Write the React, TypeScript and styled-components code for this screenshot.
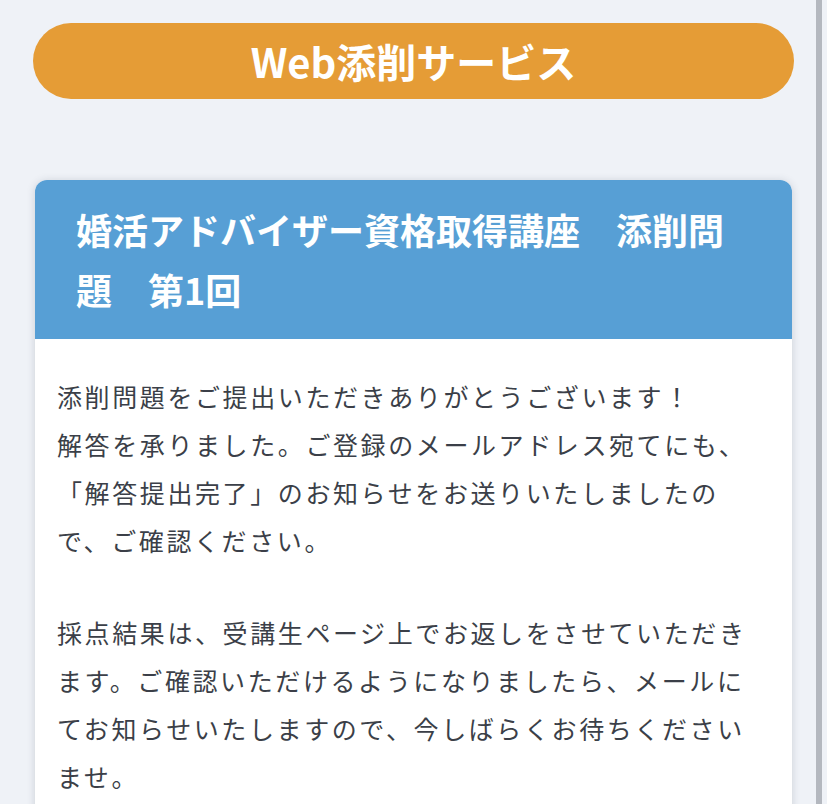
import styled, { createGlobalStyle } from 'styled-components';

const GlobalStyle = createGlobalStyle`
  html, body {
    margin: 0;
    padding: 0;
    background: #eff2f7;
  }
  body {
    font-family: "Noto Sans CJK JP", "Noto Sans", sans-serif;
  }
`;

const Page = styled.div`
  min-height: 804px;
  padding: 23px 0 0;
  background: #eff2f7;
`;

const ServiceTitle = styled.h1`
  margin: 0 33px;
  height: 76px;
  display: flex;
  align-items: center;
  justify-content: center;
  border-radius: 38px;
  background: #e59c36;
  color: #fff;
  font-size: 40px;
  font-weight: 700;
  letter-spacing: 0;
`;

const Card = styled.section`
  margin: 81px 35px 0;
  background: #fff;
  border-radius: 12px;
  overflow: hidden;
  box-shadow: 0 1px 8px rgba(40, 50, 70, 0.18);
`;

const CardHeader = styled.h2`
  margin: 0;
  padding: 19px 40px 20px 41px;
  background: #579fd5;
  color: #fff;
  font-size: 36px;
  font-weight: 700;
  line-height: 60px;
`;

const CardBody = styled.div`
  padding: 33px 22px 60px;
`;

const Paragraph = styled.p<{ $gap?: number }>`
  margin: ${({ $gap }) => ($gap ?? 0)}px 0 0;
  color: #3b3f48;
  font-size: 25px;
  line-height: 48px;
  letter-spacing: 2.6px;
`;

const ScrollRail = styled.div`
  position: fixed;
  top: 0;
  right: 5px;
  width: 6px;
  height: 100vh;
  background: #b4b8bf;
`;

const App = (): JSX.Element => (
  <>
    <GlobalStyle />
    <Page>
      <ServiceTitle>Web添削サービス</ServiceTitle>
      <Card>
        <CardHeader>婚活アドバイザー資格取得講座　添削問題　第1回</CardHeader>
        <CardBody>
          <Paragraph>
            添削問題をご提出いただきありがとうございます！
            <br />
            解答を承りました。ご登録のメールアドレス宛てにも、「解答提出完了」のお知らせをお送りいたしましたので、ご確認ください。
          </Paragraph>
          <Paragraph $gap={44}>
            採点結果は、受講生ページ上でお返しをさせていただきます。ご確認いただけるようになりましたら、メールにてお知らせいたしますので、今しばらくお待ちくださいませ。
          </Paragraph>
        </CardBody>
      </Card>
    </Page>
    <ScrollRail />
  </>
);

export default App;
